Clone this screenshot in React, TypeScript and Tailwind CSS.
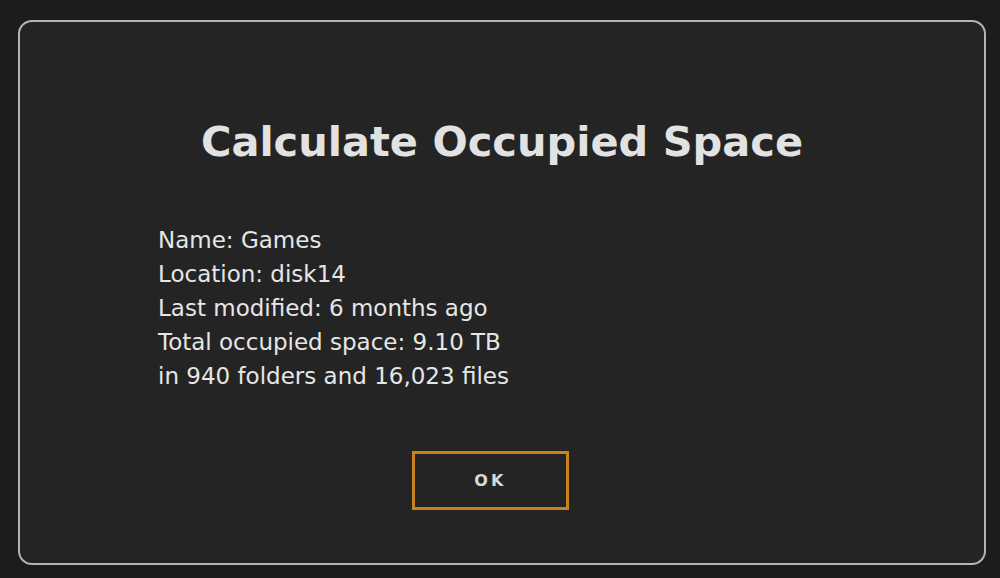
export default function App() {
  const lines = [
    "Name: Games",
    "Location: disk14",
    "Last modified: 6 months ago",
    "Total occupied space: 9.10 TB",
    "in 940 folders and 16,023 files",
  ];

  return (
    <div className="w-[1000px] h-[578px] bg-[#1c1c1c] pt-[20px] pl-[18px] font-['DejaVu_Sans',sans-serif]">
      <div className="w-[968px] h-[545px] rounded-[14px] border-2 border-[#b4b4b4] bg-[#242424] flex flex-col">
        {/* Title */}
        <h1 className="mt-[92px] text-center text-[41.5px] leading-[56px] font-bold text-[#e2e2e2]">
          Calculate Occupied Space
        </h1>

        {/* Details */}
        <div className="mt-[53px] pl-[138px] text-[23px] leading-[34px] text-[#e6e6e6]">
          {lines.map((l) => (
            <div key={l}>{l}</div>
          ))}
        </div>

        <div className="mt-[58px] pl-[392px]">
          <button className="w-[157px] h-[59px] border-[3px] border-[#c8821e] bg-transparent text-[#d8d8d8] text-[16px] font-bold tracking-[0.2em]">
            OK
          </button>
        </div>
      </div>
    </div>
  );
}
